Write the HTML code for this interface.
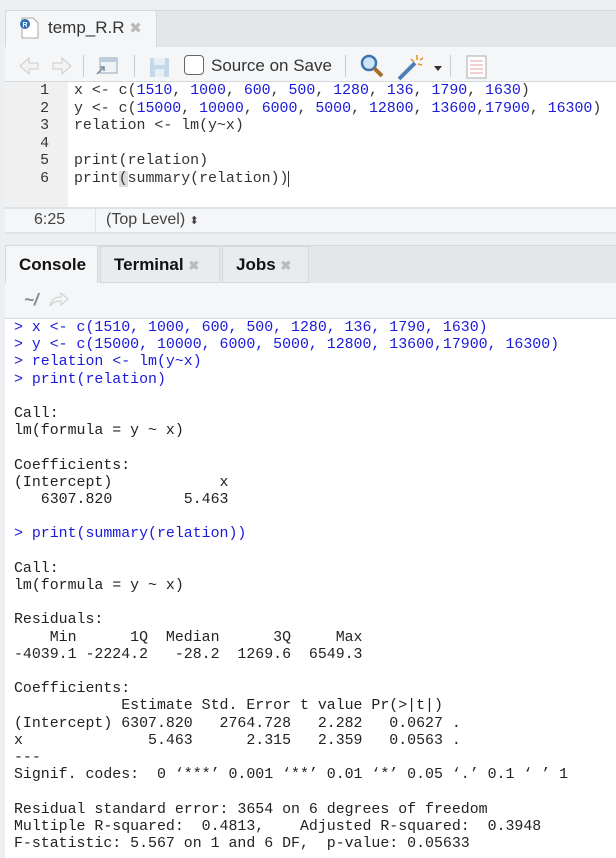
<!DOCTYPE html>
<html><head><meta charset="utf-8"><style>
*{margin:0;padding:0;box-sizing:border-box}
body{width:616px;height:858px;overflow:hidden;background:#eceff2;font-family:"Liberation Sans",sans-serif;position:relative}
.abs{position:absolute}
.mono{font-family:"Liberation Mono","DejaVu Sans Mono",monospace;font-size:14.9px;white-space:pre}
.blue{color:#1a1adb}
</style></head><body>
<div class="abs" style="left:5px;top:10px;width:611px;height:37px;background:#e4e7ea;border-top:1px solid #d6d9dc;border-left:1px solid #d6d9dc"></div>
<div class="abs" style="left:5px;top:10px;width:152px;height:38px;background:#f4f6f8;border:1px solid #d6d9dc;border-bottom:none;border-radius:3px 3px 0 0"></div>
<svg class="abs" style="left:17px;top:15px" width="26" height="26"><path d="M5 3h11l5 5v15H5z" fill="#fff" stroke="#aaa"/><circle cx="8" cy="9" r="5" fill="#2f6db5"/><text x="5.5" y="12" font-size="7" fill="#fff" font-family="Liberation Sans" font-weight="bold">R</text></svg>
<div class="abs" style="left:48px;top:18px;font-size:17px;color:#333">temp_R.R <span style="color:#bbb;font-size:15px">✖</span></div>
<div class="abs" style="left:5px;top:47px;width:611px;height:34px;background:#f4f6f8"></div>
<svg class="abs" style="left:18px;top:55px" width="55" height="22"><path d="M2 11l9-8v5h9v6h-9v5z" fill="#f3f3f3" stroke="#ccc"/><path d="M53 11l-9-8v5h-9v6h9v5z" fill="#f3f3f3" stroke="#ccc"/></svg>
<div class="abs" style="left:83px;top:55px;width:1px;height:22px;background:#ccc"></div>
<svg class="abs" style="left:94px;top:55px" width="26" height="22"><rect x="6" y="3" width="17" height="15" fill="#eef3f8" stroke="#9ab"/><rect x="6" y="3" width="17" height="4" fill="#bcd"/><path d="M3 19l7-7M6 12h4v4" stroke="#789" fill="none" stroke-width="1.5"/></svg>
<div class="abs" style="left:134px;top:55px;width:1px;height:22px;background:#ccc"></div>
<svg class="abs" style="left:148px;top:55px" width="24" height="24"><rect x="2" y="3" width="19" height="19" fill="#c5d8ea"/><rect x="6" y="3" width="11" height="7" fill="#e6eef6"/><rect x="7" y="14" width="9" height="8" fill="#e6eef6"/></svg>
<div class="abs" style="left:184px;top:55px;width:20px;height:20px;border:1.5px solid #666;border-radius:4px;background:#fff"></div>
<div class="abs" style="left:211px;top:56px;font-size:17px;color:#333">Source on Save</div>
<div class="abs" style="left:345px;top:55px;width:1px;height:22px;background:#ccc"></div>
<svg class="abs" style="left:358px;top:52px" width="28" height="28"><circle cx="11" cy="11" r="7" fill="#cfe4f5" stroke="#3b76b0" stroke-width="2.5"/><path d="M16 16l8 8" stroke="#a86e2a" stroke-width="4"/></svg>
<svg class="abs" style="left:396px;top:52px" width="30" height="30"><path d="M3 27l16-16" stroke="#4b7fb5" stroke-width="4"/><path d="M21 3v5M15 7l3 3M24 8l3-2M22 12l4 1" stroke="#f08a1c" stroke-width="1.5"/></svg>
<div class="abs" style="left:434px;top:66px;border:4px solid transparent;border-top:5px solid #333"></div>
<div class="abs" style="left:450px;top:55px;width:1px;height:22px;background:#ccc"></div>
<svg class="abs" style="left:465px;top:54px" width="24" height="26"><rect x="2" y="2" width="19" height="22" fill="#fff" stroke="#aaa"/><path d="M5 7h13M5 11h13M5 15h13M5 19h13" stroke="#e3a0a0"/></svg>
<div class="abs" style="left:5px;top:81px;width:611px;height:126px;background:#fff;border-top:1px solid #d6d9dc"></div>
<div class="abs" style="left:5px;top:82px;width:63px;height:125px;background:#f0f0f0"></div>
<div class="abs mono" style="left:5px;top:83px;width:44px;text-align:right;line-height:17.5px;color:#333">1
2
3
4
5
6</div>
<div class="abs mono" style="left:74px;top:83px;line-height:17.5px;color:#333">x &lt;- c(<span class="blue">1510</span>, <span class="blue">1000</span>, <span class="blue">600</span>, <span class="blue">500</span>, <span class="blue">1280</span>, <span class="blue">136</span>, <span class="blue">1790</span>, <span class="blue">1630</span>)
y &lt;- c(<span class="blue">15000</span>, <span class="blue">10000</span>, <span class="blue">6000</span>, <span class="blue">5000</span>, <span class="blue">12800</span>, <span class="blue">13600</span>,<span class="blue">17900</span>, <span class="blue">16300</span>)
relation &lt;- lm(y~x)

print(relation)
print<span style="background:#ddd">(</span>summary(relation))<span style="border-left:1px solid #333"></span></div>
<div class="abs" style="left:5px;top:207px;width:611px;height:27px;background:#f4f6f8;border-top:2px solid #dfe2e5;border-bottom:2px solid #dfe2e5"></div>
<div class="abs" style="left:95px;top:209px;width:1px;height:23px;background:#dfe2e5"></div>
<div class="abs" style="left:34px;top:211px;font-size:16px;color:#444">6:25</div>
<div class="abs" style="left:106px;top:211px;font-size:16px;color:#444">(Top Level) <span style="font-size:11px">⬍</span></div>
<div class="abs" style="left:5px;top:245px;width:611px;height:38px;background:#e4e7ea;border-top:1px solid #d6d9dc"></div>
<div class="abs" style="left:5px;top:245px;width:93px;height:39px;background:#f4f6f8;border:1px solid #d6d9dc;border-bottom:none"></div>
<div class="abs" style="left:100px;top:246px;width:120px;height:37px;background:#e9ecef;border:1px solid #d6d9dc"></div>
<div class="abs" style="left:222px;top:246px;width:87px;height:37px;background:#e9ecef;border:1px solid #d6d9dc"></div>
<div class="abs" style="left:19px;top:255px;font-size:17px;font-weight:bold;color:#111">Console</div>
<div class="abs" style="left:114px;top:255px;font-size:17px;font-weight:bold;color:#111">Terminal <span style="color:#bbb;font-size:13px">✖</span></div>
<div class="abs" style="left:236px;top:255px;font-size:17px;font-weight:bold;color:#111">Jobs <span style="color:#bbb;font-size:13px">✖</span></div>
<div class="abs" style="left:5px;top:283px;width:611px;height:35px;background:#f4f6f8"></div>
<div class="abs" style="left:24px;top:290px;font-size:17px;font-weight:bold;color:#888;font-style:italic">~/</div>
<svg class="abs" style="left:47px;top:290px" width="24" height="20"><path d="M3 16c1-6 5-9 11-9V3l7 6-7 6v-4c-5 0-8 1-11 5z" fill="#f4f6f8" stroke="#ccc"/></svg>
<div class="abs" style="left:5px;top:318px;width:611px;height:540px;background:#fff;border-top:1px solid #d6d9dc"></div>
<div class="abs mono" style="left:14px;top:320px;line-height:17.2px;color:#222"><span class="blue">&gt; x &lt;- c(1510, 1000, 600, 500, 1280, 136, 1790, 1630)
&gt; y &lt;- c(15000, 10000, 6000, 5000, 12800, 13600,17900, 16300)
&gt; relation &lt;- lm(y~x)
&gt; print(relation)</span>

Call:
lm(formula = y ~ x)

Coefficients:
(Intercept)            x  
   6307.820        5.463  

<span class="blue">&gt; print(summary(relation))</span>

Call:
lm(formula = y ~ x)

Residuals:
    Min      1Q  Median      3Q     Max 
-4039.1 -2224.2   -28.2  1269.6  6549.3 

Coefficients:
            Estimate Std. Error t value Pr(&gt;|t|)  
(Intercept) 6307.820   2764.728   2.282   0.0627 .
x              5.463      2.315   2.359   0.0563 .
---
Signif. codes:  0 ‘***’ 0.001 ‘**’ 0.01 ‘*’ 0.05 ‘.’ 0.1 ‘ ’ 1

Residual standard error: 3654 on 6 degrees of freedom
Multiple R-squared:  0.4813,	Adjusted R-squared:  0.3948 
F-statistic: 5.567 on 1 and 6 DF,  p-value: 0.05633</div>
</body></html>
